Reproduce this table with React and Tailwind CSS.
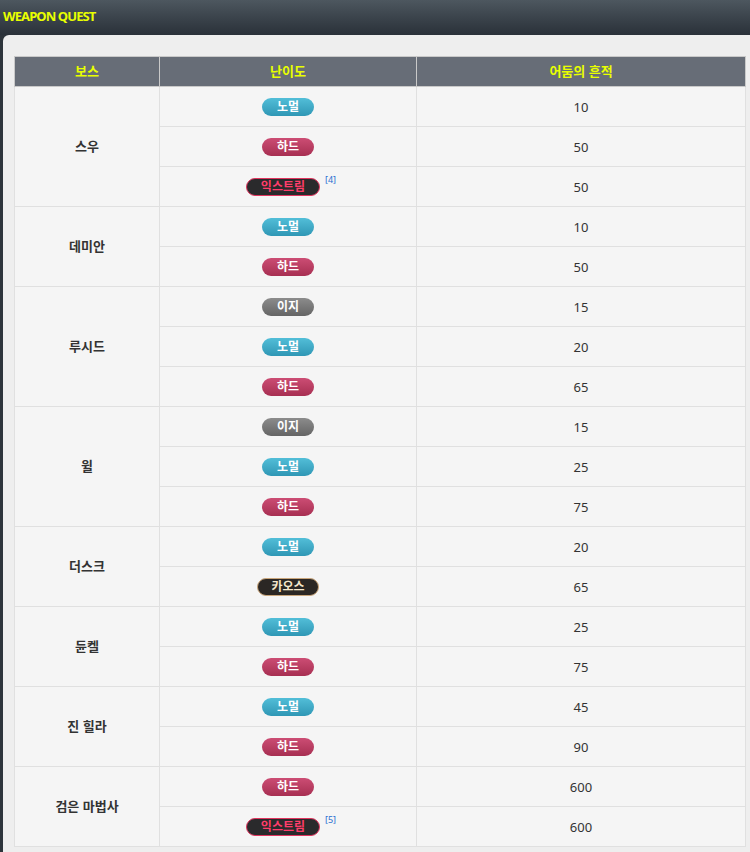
import React from "react";

const badgeStyles = {
  노멀: "w-[52px] bg-gradient-to-b from-[#52bed8] to-[#2f97b5] text-white",
  하드: "w-[52px] bg-gradient-to-b from-[#cc4d74] to-[#a72f52] text-white",
  이지: "w-[52px] bg-gradient-to-b from-[#8c8c8c] to-[#656565] text-white",
  익스트림: "w-[74px] bg-[#2a2a2c] border border-[#e0345e] text-[#ff3d6a]",
  카오스: "w-[62px] bg-[#2b2724] border border-[#c9a57a] text-[#f6e7cc]",
};

function Badge({ level }) {
  return (
    <span
      className={`inline-flex items-center justify-center h-[18px] rounded-full text-[12px] font-bold leading-none align-middle ${badgeStyles[level]}`}
    >
      {level}
    </span>
  );
}

const data = [
  { boss: "스우", rows: [["노멀", "10"], ["하드", "50"], ["익스트림", "50", "[4]"]] },
  { boss: "데미안", rows: [["노멀", "10"], ["하드", "50"]] },
  { boss: "루시드", rows: [["이지", "15"], ["노멀", "20"], ["하드", "65"]] },
  { boss: "윌", rows: [["이지", "15"], ["노멀", "25"], ["하드", "75"]] },
  { boss: "더스크", rows: [["노멀", "20"], ["카오스", "65"]] },
  { boss: "듄켈", rows: [["노멀", "25"], ["하드", "75"]] },
  { boss: "진 힐라", rows: [["노멀", "45"], ["하드", "90"]] },
  { boss: "검은 마법사", rows: [["하드", "600"], ["익스트림", "600", "[5]"]] },
];

export default function App() {
  return (
    <div
      className="w-[750px] h-[852px] overflow-hidden bg-[#2d343b]"
      style={{ fontFamily: '"Noto Sans", "Noto Sans CJK KR", sans-serif' }}
    >
      <div className="h-[35px] bg-gradient-to-b from-[#4d575f] to-[#2a3139] flex items-center pl-[3px]">
        <span className="text-[#e8ff00] text-[13px] font-bold tracking-[-0.9px] leading-none mt-[-2px]">
          WEAPON QUEST
        </span>
      </div>
      <div className="ml-[3px] bg-[#eeeeee] rounded-tl-[6px] pt-[21px] pl-[11px] h-[817px]">
        <table className="border-collapse w-[731px] table-fixed text-[13px] text-[#333]">
          <colgroup>
            <col className="w-[145px]" />
            <col className="w-[257px]" />
            <col className="w-[329px]" />
          </colgroup>
          <thead>
            <tr className="h-[30px] bg-[#676d77]">
              {["보스", "난이도", "어둠의 흔적"].map((h) => (
                <th
                  key={h}
                  className="border border-[#c9c9c9] text-[#e8ff00] font-bold text-[13px] p-0"
                >
                  {h}
                </th>
              ))}
            </tr>
          </thead>
          <tbody>
            {data.map((g) =>
              g.rows.map((r, i) => (
                <tr key={g.boss + i} className="h-[40px] bg-[#f5f5f5]">
                  {i === 0 && (
                    <td
                      rowSpan={g.rows.length}
                      className="border border-[#e0e0e0] text-center font-bold text-[#333] p-0"
                    >
                      {g.boss}
                    </td>
                  )}
                  <td className="border border-[#e0e0e0] text-center p-0">
                    <span className={`inline-flex items-start ${r[2] ? "pl-[6px]" : ""}`}>
                      <Badge level={r[0]} />
                      {r[2] && (
                        <span className="ml-[5px] text-[9px] leading-none text-[#2a6fd1] mt-[-3px]">
                          {r[2]}
                        </span>
                      )}
                    </span>
                  </td>
                  <td className="border border-[#e0e0e0] text-center p-0">
                    <span className="relative top-[1px]">{r[1]}</span>
                  </td>
                </tr>
              ))
            )}
          </tbody>
        </table>
      </div>
    </div>
  );
}
